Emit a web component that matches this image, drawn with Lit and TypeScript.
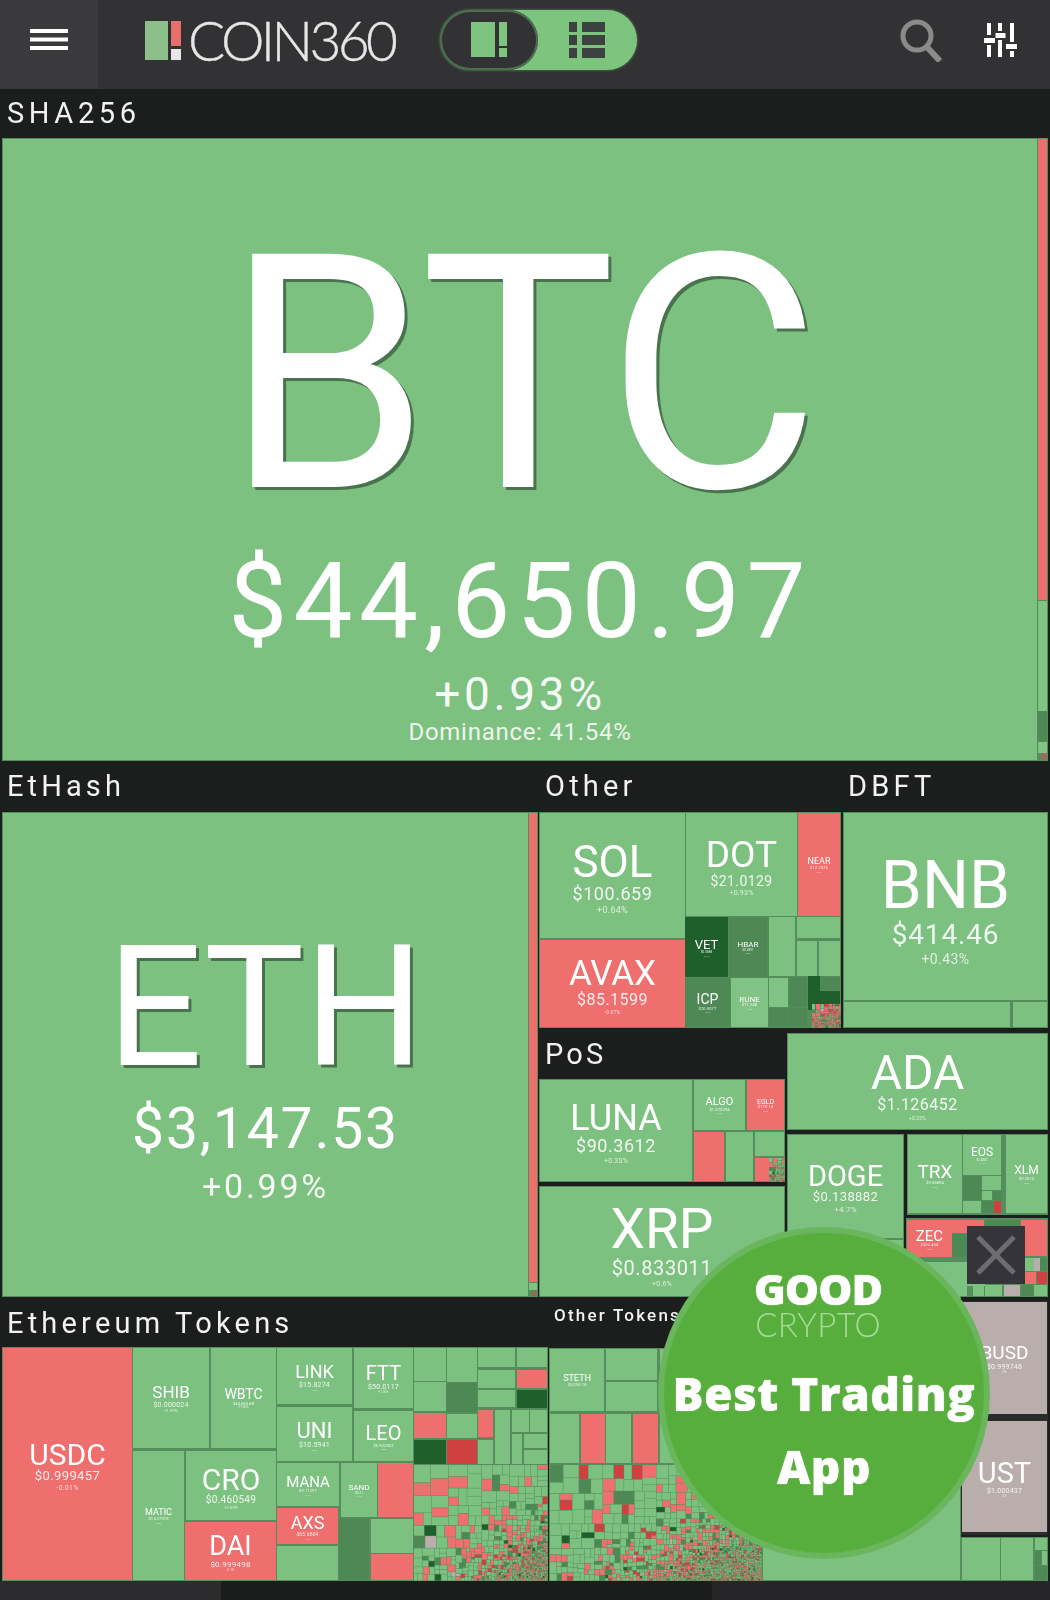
import { LitElement, html, css, svg } from "lit";
import { customElement } from "lit/decorators.js";

const G = "#7dc180", R = "#ef6e6e", M = "#4d8855", D = "#1f5f2c", S = "#cf4040", Y = "#b9aeab", L = "#80c384";
const TOP = 89;

interface Cell { b: [number, number, number, number]; color: string; sym?: string; fs?: number; price?: string; pfs?: number; chg?: string; cfs?: number; note?: string; nfs?: number; big?: boolean; pad?: number; ls?: number; pls?: number; }

function c(x0: number, y0: number, x1: number, y1: number, color: string, sym?: string, fs?: number, price?: string, pfs?: number, chg?: string, cfs?: number): Cell {
  return { b: [x0, y0, x1, y1], color, sym, fs, price, pfs, chg, cfs };
}

const BK = "#558d5d";
const backs: Cell[] = [
  c(2, 138, 1048, 761, BK), c(2, 812, 538, 1297, BK), c(539, 812, 841, 1028, BK), c(843, 812, 1048, 1028, BK),
  c(539, 1079, 785, 1182, BK), c(539, 1186, 785, 1297, BK), c(787, 1033, 1048, 1130, BK), c(787, 1134, 904, 1297, BK),
  c(907, 1134, 1048, 1215, BK), c(906, 1218, 1048, 1297, BK), c(2, 1347, 548, 1581, BK), c(549, 1348, 762, 1581, BK),
  c(762, 1264, 961, 1581, BK), c(961, 1301, 1048, 1535, "#2b2b2b"), c(961, 1537, 1048, 1581, BK),
];

const cells: Cell[] = [
  ...backs,
  { b: [3, 139, 1037, 760], color: G, sym: "BTC", fs: 328, ls: -5, price: "$44,650.97", pfs: 105, pls: 0.06, chg: "+0.93%", cfs: 46, note: "Dominance: 41.54%", nfs: 24, big: true, pad: 15 },
  c(1038, 139, 1047, 600, R), c(1038, 601, 1047, 711, L), c(1038, 711, 1047, 741, M), c(1038, 742, 1047, 753, L), c(1041, 753, 1047, 760, "#9a6a5c"),
  { b: [3, 813, 528, 1296], color: G, sym: "ETH", fs: 168, price: "$3,147.53", pfs: 57, pls: 0.032, chg: "+0.99%", cfs: 34, big: true, pad: 0 },
  c(529, 813, 537, 1282, R), c(529, 1283, 537, 1290, L), c(532, 1291, 537, 1296, "#8c6a55"),
  c(540, 813, 685, 938, G, "SOL", 44, "$100.659", 18, "+0.64%", 9),
  c(686, 813, 797, 916, G, "DOT", 37, "$21.0129", 14, "+0.93%", 7),
  c(798, 813, 840, 916, R, "NEAR", 9, "$12.7375", 4, "-0.1%", 2),
  c(540, 940, 685, 1027, R, "AVAX", 35, "$85.1599", 16, "-0.07%", 5),
  c(685, 917, 728, 977, D, "VET", 13, "$0.0888", 3, "+3.1%", 2),
  c(729, 917, 767, 977, M, "HBAR", 8, "$0.2891", 3, "+2.8%", 2),
  c(769, 917, 795, 976, G), c(797, 917, 840, 938, G), c(797, 941, 817, 976, G), c(819, 941, 840, 976, G),
  c(685, 978, 730, 1027, M, "ICP", 14, "$20.0077", 4, "+2.2%", 2),
  c(731, 978, 768, 1027, L, "RUNE", 8, "$11.248", 4, "+1.0%", 2),
  c(769, 978, 788, 1007, L), c(789, 977, 807, 1007, M), c(808, 976, 820, 1010, D), c(820, 977, 840, 990, M), c(820, 991, 840, 1006, D),
  c(769, 1008, 788, 1027, M), c(789, 1008, 807, 1027, M),
  c(844, 813, 1047, 1000, G, "BNB", 66, "$414.46", 28, "+0.43%", 14),
  c(844, 1002, 1010, 1027, G), c(1013, 1002, 1047, 1027, G),
  c(540, 1080, 692, 1181, G, "LUNA", 36, "$90.3612", 18, "+0.33%", 7),
  c(694, 1080, 745, 1130, G, "ALGO", 11, "$1.373294", 4, "+2.4%", 2),
  c(747, 1080, 784, 1130, R, "EGLD", 7, "$170.14", 4, "-0.3%", 2),
  c(694, 1132, 724, 1181, R), c(726, 1132, 753, 1181, G), c(755, 1132, 784, 1156, G), c(755, 1158, 769, 1181, R),
  c(540, 1187, 784, 1296, G, "XRP", 55, "$0.833011", 20, "+0.6%", 7),
  c(788, 1034, 1047, 1129, G, "ADA", 48, "$1.126452", 16, "+0.33%", 5),
  c(788, 1135, 903, 1238, G, "DOGE", 29, "$0.138882", 13, "+4.7%", 8),
  c(788, 1240, 903, 1296, G),
  c(908, 1135, 962, 1213, G, "TRX", 19, "$0.06894", 4, "+1.2%", 2),
  c(963, 1135, 1001, 1175, G, "EOS", 12, "$2.4581", 3, "+1.1%", 2),
  c(963, 1176, 981, 1200, M), c(982, 1176, 1001, 1190, G), c(982, 1191, 992, 1200, G), c(993, 1191, 1001, 1200, M),
  c(963, 1201, 981, 1213, G), c(982, 1201, 993, 1213, M), c(994, 1201, 1001, 1213, S),
  c(1006, 1135, 1047, 1213, G, "XLM", 12, "$0.2014", 4, "+0.9%", 2),
  c(907, 1220, 952, 1257, R, "ZEC", 15, "$202.434", 4, "-0.8%", 2),
  c(952, 1220, 967, 1233, R), c(952, 1234, 967, 1257, M),
  c(985, 1220, 1020, 1226, M), c(967, 1220, 984, 1226, R), c(1021, 1220, 1047, 1256, R),
  c(906, 1262, 967, 1296, G), c(967, 1262, 985, 1286, G),
  c(973, 1285, 984, 1296, G), c(985, 1285, 1002, 1296, G), c(1004, 1285, 1020, 1296, Y), c(1022, 1285, 1033, 1296, M), c(1034, 1285, 1047, 1296, G),
  c(1025, 1258, 1034, 1271, G), c(1034, 1258, 1040, 1271, Y), c(1040, 1258, 1047, 1271, M), c(1025, 1272, 1036, 1284, R), c(1037, 1272, 1047, 1284, S),
  // Ethereum tokens
  c(3, 1348, 132, 1580, R, "USDC", 30, "$0.999457", 13, "-0.01%", 7),
  c(133, 1348, 209, 1448, G, "SHIB", 17, "$0.000024", 7, "+1.09%", 4),
  c(211, 1348, 276, 1448, G, "WBTC", 14, "$44,600.88", 4, "+1.06%", 3),
  c(133, 1451, 184, 1580, G, "MATIC", 9, "$1.627919", 4, "+0.5%", 2),
  c(186, 1451, 276, 1520, G, "CRO", 30, "$0.460549", 10, "+2.09%", 4),
  c(185, 1522, 276, 1580, R, "DAI", 27, "$0.999498", 8, "-0.1%", 3),
  c(277, 1348, 352, 1404, G, "LINK", 18, "$15.8274", 7, "+1.2%", 2),
  c(354, 1348, 413, 1408, G, "FTT", 20, "$50.0117", 7, "+1.06%", 3),
  c(277, 1407, 352, 1461, G, "UNI", 22, "$10.5941", 7, "+0.4%", 2),
  c(354, 1411, 413, 1461, G, "LEO", 20, "$5.922552", 4, "+0.8%", 2),
  c(277, 1463, 339, 1506, G, "MANA", 15, "$3.11297", 4, "+1.1%", 2),
  c(341, 1463, 377, 1517, G, "SAND", 8, "$5.21", 3, "+1.4%", 2),
  c(378, 1463, 413, 1517, R),
  c(277, 1508, 338, 1544, R, "AXS", 18, "$65.6804", 5, "-0.7%", 2),
  c(277, 1546, 338, 1580, G), c(339, 1519, 369, 1580, M), c(371, 1519, 413, 1553, G), c(371, 1554, 413, 1580, R),
  c(414, 1348, 446, 1381, G), c(414, 1382, 446, 1411, G), c(414, 1413, 446, 1438, R), c(414, 1440, 446, 1464, D),
  c(447, 1348, 477, 1382, G), c(447, 1383, 477, 1412, M), c(447, 1414, 477, 1438, G), c(447, 1440, 477, 1464, S),
  c(478, 1348, 515, 1367, G), c(478, 1370, 515, 1388, G), c(478, 1390, 515, 1407, G),
  c(517, 1348, 547, 1367, G), c(517, 1370, 547, 1388, R), c(517, 1390, 547, 1408, D),
  c(478, 1410, 493, 1437, R), c(478, 1440, 493, 1464, G), c(495, 1410, 510, 1464, G),
  c(512, 1410, 529, 1432, G), c(530, 1410, 547, 1432, G), c(512, 1434, 522, 1464, G), c(524, 1434, 547, 1448, G), c(524, 1450, 547, 1464, G),
  // Other tokens
  c(550, 1349, 604, 1411, G, "STETH", 9, "$3,093.18", 4),
  c(606, 1349, 657, 1380, G), c(606, 1382, 657, 1411, G),
  c(550, 1414, 579, 1463, G), c(581, 1414, 605, 1463, R), c(606, 1414, 631, 1463, G), c(633, 1414, 658, 1463, R),
  c(660, 1349, 700, 1463, G), c(702, 1349, 761, 1463, G),
  c(763, 1265, 960, 1580, G),
  c(962, 1302, 1047, 1414, Y, "BUSD", 19, "$0.999748", 7, "0%", 3),
  c(962, 1421, 1047, 1532, Y, "UST", 29, "$1.000437", 7, "0%", 3),
  c(962, 1538, 1000, 1580, G), c(1001, 1538, 1033, 1580, G), c(1035, 1538, 1047, 1550, G), c(1035, 1551, 1041, 1565, M), c(1042, 1551, 1047, 1565, G), c(1035, 1566, 1047, 1580, M),
];

const labels: [string, number, number, number, number, string][] = [
  ["SHA256", 7, 113, 29, 4.6, "400"],
  ["EtHash", 7, 786, 29, 4.1, "400"],
  ["Other", 545, 786, 29, 4.2, "400"],
  ["DBFT", 848, 786, 29, 4.2, "400"],
  ["PoS", 545, 1054, 29, 3.2, "400"],
  ["Ethereum Tokens", 7, 1323, 29, 4.2, "400"],
  ["Other Tokens", 554, 1315, 17, 2.2, "500"],
];

function mulberry(a: number) {
  return () => {
    a |= 0; a = (a + 0x6d2b79f5) | 0;
    let t = Math.imul(a ^ (a >>> 15), 1 | a);
    t = (t + Math.imul(t ^ (t >>> 7), 61 | t)) ^ t;
    return ((t ^ (t >>> 14)) >>> 0) / 4294967296;
  };
}

interface Piece { x: number; y: number; w: number; h: number; f: string; }
function noise(x0: number, y0: number, x1: number, y1: number, seed: number, start: number, redBias = 0): Piece[] {
  const rnd = mulberry(seed);
  const out: Piece[] = [];
  const W = x1 - x0, H = y1 - y0;
  const pick = (size: number) => {
    const r = rnd();
    const tiny = size < 5 ? 0.2 : 0;
    const red = 0.17 + redBias + tiny;
    if (r < red) return R;
    if (r < red + 0.02 + tiny / 2) return S;
    if (r < red + 0.025 + tiny / 2 + 0.09) return M;
    if (r < red + 0.025 + tiny / 2 + 0.11) return D;
    if (r < red + 0.025 + tiny / 2 + 0.12) return Y;
    return G;
  };
  const go = (x: number, y: number, w: number, h: number) => {
    const u = (x + w / 2 - x0) / W, v = (y + h / 2 - y0) / H;
    const size = Math.max(2.3, start * (1 - u * 0.55) * (1 - v * 0.65) * (1 - u * v * 0.85));
    if (Math.max(w, h) <= size * (0.85 + rnd() * 0.5)) {
      out.push({ x, y, w: Math.max(w - 0.5, 0.9), h: Math.max(h - 0.5, 0.9), f: pick(Math.max(w, h)) });
      return;
    }
    const k = 0.38 + rnd() * 0.24;
    if (w >= h) { go(x, y, w * k, h); go(x + w * k, y, w * (1 - k), h); }
    else { go(x, y, w, h * k); go(x, y + h * k, w, h * (1 - k)); }
  };
  go(x0, y0, W, H);
  return out;
}

const pieces: Piece[] = [
  ...noise(414, 1465, 548, 1581, 11, 26),
  ...noise(550, 1465, 762, 1581, 41, 22),
  ...noise(812, 1004, 841, 1028, 5, 7, 0.2),
  ...noise(769, 1158, 785, 1182, 7, 8),
  ...noise(973, 1272, 1000, 1284, 9, 6),
];

@customElement("app-root")
export class AppRoot extends LitElement {
  static styles = css`
    :host { display: block; width: 1050px; height: 1600px; position: relative; overflow: hidden; background: #1c1d1d; font-family: Roboto, "Liberation Sans", sans-serif; color: #fff; }
    .head { height: 89px; display: flex; align-items: center; background: #323234; }
    .menu { width: 98px; height: 100%; box-sizing: border-box; padding-bottom: 11px; background: #3a3a3c; display: flex; align-items: center; justify-content: center; }
    .logo { display: flex; align-items: center; gap: 3px; margin: 0 0 9px 47px; }
    .logo svg { display: block; }
    .word { font-family: Lato, sans-serif; font-weight: 300; font-size: 55px; line-height: 60px; color: #e6e6e6; letter-spacing: -3.6px; margin-left: 3px; -webkit-text-stroke: 0.4px #e6e6e6; }
    .toggle { margin: 0 0 9px 46px; width: 197px; height: 60px; border-radius: 30px; background: #7dc47e; display: flex; box-shadow: 0 0 3px #5d8f60; }
    .seg { width: 98px; display: flex; align-items: center; justify-content: center; }
    .seg.on { background: #323234; border-radius: 30px; box-shadow: inset 0 0 0 2px #4d6f50; }
    .tools { margin: 0 0 9px auto; display: flex; align-items: center; gap: 41px; padding-right: 33px; }
    .tools svg { display: block; }
    .map { height: 1492px; position: relative; filter: blur(0.55px); }
    .cell { position: absolute; box-sizing: border-box; display: flex; flex-direction: column; align-items: center; justify-content: center; overflow: hidden; white-space: nowrap; }
    .sym { font-weight: 400; line-height: 0.98; padding-top: 0.14em; }
    .price { font-weight: 400; line-height: 1.15; opacity: 0.88; letter-spacing: 0.03em; }
    .chg { font-weight: 400; line-height: 1.2; opacity: 0.75; letter-spacing: 0.03em; }
    .note { font-weight: 400; line-height: 1.1; opacity: 0.85; letter-spacing: 0.03em; margin-top: -3px; }
    .big .sym { text-shadow: 3px 3px 0 rgba(60, 95, 65, 0.8); }
    .big .price { opacity: 1; margin-top: 6px; }
    .big .chg { opacity: 0.92; margin-top: 4px; letter-spacing: 0.08em; }
    .label { position: absolute; color: #f2f2f2; white-space: nowrap; line-height: 1; transform: translateY(-50%); }
    .noise { position: absolute; left: 0; top: 0; width: 1050px; height: 1492px; }
    .foot { height: 19px; display: flex; }
    .foot .a { width: 221px; background: #2c2c2e; }
    .foot .b { width: 491px; background: #1b1c1c; }
    .foot .c { flex: 1; background: #262628; }
    .promo { position: absolute; left: 658px; top: 1227px; width: 332px; height: 332px; box-sizing: border-box; border-radius: 50%; background: #58ae3c; border: 6px solid #69b65c; display: flex; flex-direction: column; align-items: center; filter: blur(0.6px); }
    .good { font-family: "Open Sans", sans-serif; font-weight: 800; font-size: 43px; line-height: 34px; margin: 39px 12px 0 0; letter-spacing: -1px; text-shadow: 0 0 1px #fff; }
    .crypto { font-family: Lato, sans-serif; font-weight: 300; font-size: 33px; line-height: 30px; margin: 3px 12px 0 0; color: #a5dd96; letter-spacing: 0.2px; }
    .best { font-family: "Open Sans", sans-serif; font-weight: 800; font-size: 46px; line-height: 50px; margin-top: 29px; letter-spacing: 0.5px; text-shadow: 0 0 1px #fff; white-space: nowrap; }
    .app { font-family: "Open Sans", sans-serif; font-weight: 800; font-size: 46px; line-height: 50px; margin-top: 23px; letter-spacing: 0.5px; text-shadow: 0 0 1px #fff; }
    .close { position: absolute; left: 967px; top: 1226px; width: 58px; height: 58px; background: #34343a; display: flex; align-items: center; justify-content: center; }
  `;

  private renderCell(k: Cell) {
    const [x0, y0, x1, y1] = k.b;
    return html`<div class="cell ${k.big ? "big" : ""}" style="left:${x0}px;top:${y0 - TOP}px;width:${x1 - x0}px;height:${y1 - y0}px;background:${k.color};padding-top:${k.pad ?? 0}px">
      ${k.sym ? html`<div class="sym" style="font-size:${k.fs}px;letter-spacing:${k.ls ?? 0}px">${k.sym}</div>` : ""}
      ${k.price ? html`<div class="price" style="font-size:${k.pfs}px;letter-spacing:${k.pls ?? 0.03}em">${k.price}</div>` : ""}
      ${k.chg ? html`<div class="chg" style="font-size:${k.cfs}px">${k.chg}</div>` : ""}
      ${k.note ? html`<div class="note" style="font-size:${k.nfs}px">${k.note}</div>` : ""}
    </div>`;
  }

  render() {
    return html`
      <div class="head">
        <div class="menu">
          <svg width="38" height="21" viewBox="0 0 38 21"><path d="M0 0h38v4H0zM0 8.500h38v4H0zM0 17h38v4H0z" fill="#fff"/></svg>
        </div>
        <div class="logo">
          <svg width="37" height="40" viewBox="0 0 37 40"><rect width="23" height="39" y="1" fill="#8dbf8b"/><rect x="26" y="1" width="10" height="25" fill="#e86f6c"/><rect x="26" y="29" width="10" height="11" fill="#e6e6e6"/></svg>
          <span class="word">COIN360</span>
        </div>
        <div class="toggle">
          <div class="seg on">
            <svg width="36" height="36" viewBox="0 0 36 36"><rect width="24" height="35" fill="#7dc47e"/><rect x="28" width="8" height="24" fill="#7dc47e"/><rect x="28" y="26" width="8" height="9" fill="#7dc47e"/></svg>
          </div>
          <div class="seg">
            <svg width="36" height="36" viewBox="0 0 36 36" fill="#3c4240"><path d="M0 0h8v10H0zM13 0h23v10H13zM0 13h8v10H0zM13 13h23v10H13zM0 26h8v10H0zM13 26h23v10H13z"/></svg>
          </div>
        </div>
        <div class="tools">
          <svg width="44" height="44" viewBox="0 0 44 44" fill="none" stroke="#8b8b8b"><circle cx="18" cy="18" r="14" stroke-width="5"/><path d="M27 28l14 15" stroke-width="6"/></svg>
          <svg width="33" height="34" viewBox="0 0 33 34" fill="#fff"><path d="M3 0h4v12H3zM0 15h11v5H0zM3 22h4v12H3zM14 0h4v8h-4zM11.500 10h10v5h-10zM14 17h4v17h-4zM26 0h4v19h-4zM22 21h11v5H22zM26 28h4v6h-4z"/></svg>
        </div>
      </div>
      <div class="map">
        ${cells.map((k) => this.renderCell(k))}
        <svg class="noise" viewBox="0 0 1050 1492">
          ${pieces.map((p) => svg`<rect x=${p.x} y=${p.y - TOP} width=${p.w} height=${p.h} fill=${p.f}></rect>`)}
        </svg>
        ${labels.map(([t, x, y, fs, ls, w]) => html`<div class="label" style="left:${x}px;top:${y - TOP}px;font-size:${fs}px;letter-spacing:${ls}px;font-weight:${w}">${t}</div>`)}
      </div>
      <div class="foot"><div class="a"></div><div class="b"></div><div class="c"></div></div>
      <div class="promo">
        <div class="good">GOOD</div>
        <div class="crypto">CRYPTO</div>
        <div class="best">Best Trading</div>
        <div class="app">App</div>
      </div>
      <div class="close">
        <svg width="40" height="40" viewBox="0 0 40 40" stroke="#6d6d71" stroke-width="5"><path d="M2 2l36 36M38 2L2 38"/></svg>
      </div>
    `;
  }
}
